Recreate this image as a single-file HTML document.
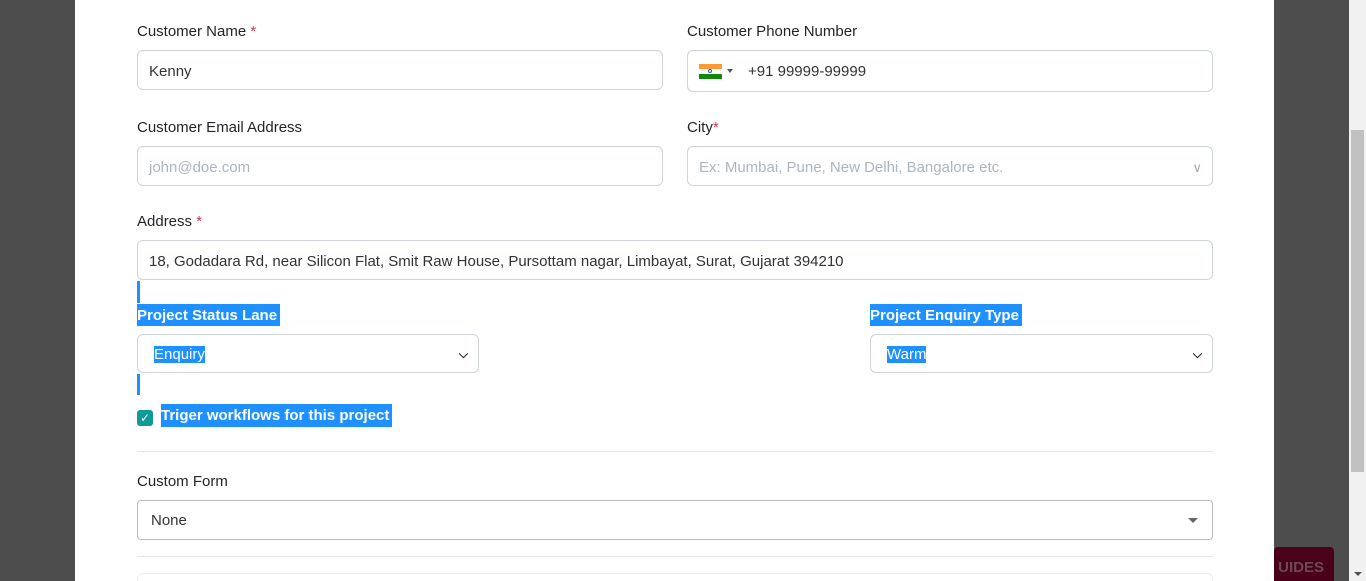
<!DOCTYPE html>
<html style="overflow:hidden;height:581px"><head><style>
body{margin:0;width:1366px;height:581px;overflow:hidden;background:#4d4d4d;font-family:"Liberation Sans",sans-serif;position:relative}
.modal{position:absolute;left:75px;top:0;width:1199px;height:581px;background:#fff}
.abs{position:absolute}
.lbl{position:absolute;font-size:15px;color:#212529}
.req{color:#dc3545}
.inp{position:absolute;height:38px;border:1px solid #ced4da;border-radius:6px;box-sizing:border-box;font-size:15px;color:#333;line-height:38px;padding-left:11px}
.ph{color:#adb5bd}
.chev{position:absolute;right:10px;top:0;font-size:12px}
</style></head><body>
<div class="modal"></div>
<div class="lbl" style="left:137px;top:23px">Customer Name <span class="req">*</span></div>
<div class="inp" style="left:137px;top:50px;width:526px;height:40px;line-height:41px">Kenny</div>
<div class="lbl" style="left:687px;top:23px">Customer Phone Number</div>
<div class="inp" style="left:687px;top:50px;width:526px;height:42px;line-height:41px;padding-left:60px">+91 99999-99999
<div class="abs" style="left:11px;top:13px;width:23px;height:15px"><div style="height:5px;background:#ff9933"></div><div style="height:5px;background:#fff;position:relative"><div style="position:absolute;left:9px;top:0;width:4px;height:4px;border-radius:50%;border:1px solid #2255aa;box-sizing:border-box"></div></div><div style="height:5px;background:#138808"></div></div>
<div class="abs" style="left:39px;top:18px;border-left:3px solid transparent;border-right:3px solid transparent;border-top:4px solid #555"></div></div>
<div class="lbl" style="left:137px;top:119px">Customer Email Address</div>
<div class="inp ph" style="left:137px;top:146px;width:526px;height:40px;line-height:41px">john@doe.com</div>
<div class="lbl" style="left:687px;top:119px">City<span class="req">*</span></div>
<div class="inp ph" style="left:687px;top:146px;width:526px;height:40px;line-height:41px">Ex: Mumbai, Pune, New Delhi, Bangalore etc.<span class="chev" style="color:#aaa;font-size:13px">&#x2228;</span></div>
<div class="lbl" style="left:137px;top:213px">Address <span class="req">*</span></div>
<div class="inp" style="left:137px;top:240px;width:1076px;height:40px;line-height:41px">18, Godadara Rd, near Silicon Flat, Smit Raw House, Pursottam nagar, Limbayat, Surat, Gujarat 394210</div>
<div class="abs" style="left:137px;top:281px;width:3px;height:22px;background:#1e90ff"></div>
<div class="lbl" style="left:137px;top:304px;font-weight:bold;padding:0 3px 0 0;height:22px;line-height:23px;background:#1e90ff;color:#fff">Project Status Lane</div>
<div class="inp" style="left:137px;top:334px;width:342px;height:39px;padding-left:16px;line-height:39px"><span style="background:#1e90ff;color:#fff">Enquiry</span><span class="chev" style="color:#222;font-weight:bold">&#x2335;</span></div>
<div class="lbl" style="left:870px;top:304px;font-weight:bold;height:22px;line-height:23px;background:#1e90ff;color:#fff;padding-right:3px">Project Enquiry Type</div>
<div class="inp" style="left:870px;top:334px;width:343px;height:39px;padding-left:16px;line-height:39px"><span style="background:#1e90ff;color:#fff">Warm</span><span class="chev" style="color:#222;font-weight:bold">&#x2335;</span></div>
<div class="abs" style="left:137px;top:374px;width:3px;height:21px;background:#1e90ff"></div>
<div class="abs" style="left:137px;top:410px;width:16px;height:16px;border-radius:3px;background:#0f9a9a;color:#fff;font-size:12px;line-height:16px;text-align:center">&#10003;</div>
<div class="lbl" style="left:161px;top:404px;height:23px;line-height:24px;font-weight:bold;background:#1e90ff;color:#fff;padding-right:3px">Triger workflows for this project</div>
<div class="abs" style="left:137px;top:451px;width:1076px;height:1px;background:#e3e3e3"></div>
<div class="lbl" style="left:137px;top:473px">Custom Form</div>
<div class="inp" style="left:137px;top:500px;width:1076px;height:40px;line-height:40px;padding-left:13px;border-color:#bbb;border-radius:4px">None<div class="abs" style="right:14px;top:17px;border-left:5px solid transparent;border-right:5px solid transparent;border-top:5px solid #666"></div></div>
<div class="abs" style="left:137px;top:556px;width:1076px;height:1px;background:#e3e3e3"></div>
<div class="abs" style="left:137px;top:573px;width:1076px;height:8px;border:1px solid #eee;border-bottom:none;border-radius:6px 6px 0 0;box-sizing:border-box"></div>
<div class="abs" style="left:1274px;top:547px;width:60px;height:34px;background:#4a0019;border-radius:4px 4px 0 0;color:#6a4a55;font-weight:bold;font-size:15px;line-height:42px;overflow:hidden">&nbsp;UIDES</div>
<div class="abs" style="left:1349px;top:0;width:17px;height:581px;background:#f1f1f1"></div>
<div class="abs" style="left:1351px;top:130px;width:13px;height:342px;background:#c1c1c1"></div>
<div class="abs" style="left:1354px;top:572px;border-left:4px solid transparent;border-right:4px solid transparent;border-top:4px solid #505050"></div>
</body></html>
